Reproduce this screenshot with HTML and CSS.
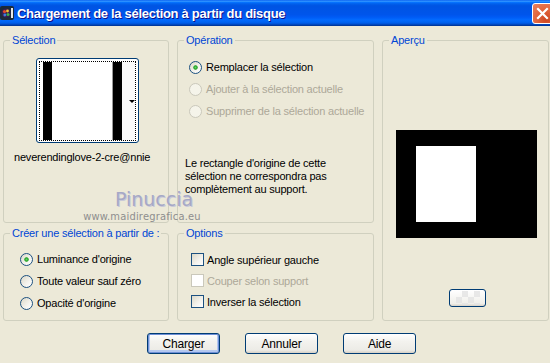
FILE: index.html
```html
<!DOCTYPE html>
<html lang="fr">
<head>
    <meta charset="UTF-8">
    <title>Chargement de la sélection à partir du disque</title>
    <link rel="stylesheet" href="styles.css">
</head>
<body>
    <div class="window">
        <div class="titlebar">
            <svg class="app-icon" width="14" height="14" viewBox="0 0 14 14">
                <rect x="0" y="0" width="14" height="14" rx="2" fill="#1b2a3a"/>
                <circle cx="6" cy="7" r="4.5" fill="#3a1d4f"/>
                <circle cx="4.5" cy="5.5" r="1.6" fill="#e04a2a"/>
                <circle cx="7.5" cy="5" r="1.4" fill="#f2c230"/>
                <circle cx="8" cy="8.5" r="1.5" fill="#3fb04a"/>
                <circle cx="4.8" cy="9" r="1.4" fill="#3a7ee0"/>
                <rect x="11" y="2" width="2" height="10" fill="#e8e8e8"/>
            </svg>
            <span class="title">Chargement de la sélection à partir du disque</span>
            <div class="close-btn">
                <svg width="13" height="13" viewBox="0 0 13 13">
                    <path d="M2 2 L11 11 M11 2 L2 11" stroke="#fff" stroke-width="2.2" stroke-linecap="square"/>
                </svg>
            </div>
        </div>

        <div class="content">
            <div class="groups">
                <fieldset class="group group-selection">
                    <legend>Sélection</legend>
                    <div class="thumb">
                        <div class="thumb-focus">
                            <span class="thumb-bar"></span>
                            <span class="thumb-white"></span>
                            <span class="thumb-bar"></span>
                            <span class="thumb-rest"><span class="thumb-arrow"></span></span>
                        </div>
                    </div>
                    <div class="filename">neverendinglove-2-cre@nnie</div>
                </fieldset>

                <fieldset class="group group-operation">
                    <legend>Opération</legend>
                    <div class="choices">
                        <label class="choice"><span class="radio checked"></span>Remplacer la sélection</label>
                        <label class="choice disabled"><span class="radio"></span>Ajouter à la sélection actuelle</label>
                        <label class="choice disabled"><span class="radio"></span>Supprimer de la sélection actuelle</label>
                    </div>
                    <p class="note">Le rectangle d'origine de cette<br>sélection ne correspondra pas<br>complètement au support.</p>
                </fieldset>

                <fieldset class="group group-preview">
                    <legend>Aperçu</legend>
                    <div class="preview-canvas">
                        <div class="preview-shape"></div>
                    </div>
                    <div class="preview-btn"><span class="checker"></span></div>
                </fieldset>

                <fieldset class="group group-create">
                    <legend>Créer une sélection à partir de :</legend>
                    <div class="choices">
                        <label class="choice"><span class="radio checked"></span>Luminance d'origine</label>
                        <label class="choice"><span class="radio"></span>Toute valeur sauf zéro</label>
                        <label class="choice"><span class="radio"></span>Opacité d'origine</label>
                    </div>
                </fieldset>

                <fieldset class="group group-options">
                    <legend>Options</legend>
                    <div class="choices">
                        <label class="choice"><span class="check"></span>Angle supérieur gauche</label>
                        <label class="choice disabled"><span class="check"></span>Couper selon support</label>
                        <label class="choice"><span class="check"></span>Inverser la sélection</label>
                    </div>
                </fieldset>
            </div>

            <div class="buttons">
                <button class="btn btn-default">Charger</button>
                <button class="btn">Annuler</button>
                <button class="btn">Aide</button>
            </div>

            <div class="watermark">
                <div class="wm-name">Pinuccia</div>
                <div class="wm-url">www.maidiregrafica.eu</div>
            </div>
        </div>
    </div>
</body>
</html>
```

FILE: styles.css
```css
body {
    margin: 0;
    padding: 0;
    background-color: #ece9d8;
    font-family: "Liberation Sans", Arial, sans-serif;
    font-size: 11px;
    letter-spacing: -0.2px;
    color: #000;
    overflow: hidden;
}
.window {
    width: 550px;
    height: 363px;
    overflow: hidden;
    position: relative;
    background-color: #ece9d8;
}
.titlebar {
    height: 26px;
    display: flex;
    align-items: center;
    background: linear-gradient(to bottom, #0058ee 0%, #3593ff 4%, #288eff 6%, #127dff 8%, #036ffc 10%, #0262ee 14%, #0057e5 20%, #0054e3 24%, #0055eb 56%, #005bf5 66%, #026afe 76%, #0062ef 86%, #0052d6 92%, #0040ab 96%, #003092 100%);
}
.app-icon {
    flex: none;
}
.title {
    margin-left: 3px;
    color: #fff;
    font-family: "Liberation Sans", sans-serif;
    font-weight: bold;
    font-size: 13px;
    letter-spacing: -0.3px;
    text-shadow: 1px 1px #0f1089;
    white-space: nowrap;
}
.close-btn {
    margin-left: auto;
    margin-right: -3px;
    width: 19px;
    height: 19px;
    border: 1px solid #fff;
    border-radius: 3px;
    background: radial-gradient(circle at 70% 80%, #cc4620 0%, #e1633b 45%, #e9825f 100%);
    display: flex;
    align-items: center;
    justify-content: center;
}
.content {
    padding: 8px 0 0 3px;
}
.groups {
    display: grid;
    grid-template-columns: 166px 197px 167px;
    grid-template-rows: 189px 94px;
    column-gap: 8px;
    row-gap: 4px;
}
.group {
    margin: 0;
    padding: 0;
    min-width: 0;
    box-sizing: border-box;
    border: 1px solid #d0d0bf;
    border-radius: 3px;
}
.group legend {
    margin-left: 6px;
    padding: 0 2px;
    color: #0046d5;
    font-size: 11px;
    line-height: 12px;
    white-space: nowrap;
}
.group-preview {
    grid-column: 3;
    grid-row: 1 / 3;
}
.group-create {
    grid-column: 1;
    grid-row: 2;
}
.group-options {
    grid-column: 2;
    grid-row: 2;
}

/* selection thumbnail */
.thumb {
    width: 103px;
    height: 85px;
    box-sizing: border-box;
    margin: 12px 0 0 32px;
    padding: 2px 2px 1px;
    border: 1px solid #003c74;
    border-radius: 3px;
    background-color: #fff;
}
.thumb-focus {
    height: 100%;
    box-sizing: border-box;
    border: 1px dotted #000;
    display: flex;
    padding-left: 3px;
}
.thumb-bar {
    width: 9px;
    background-color: #000;
}
.thumb-white {
    width: 60px;
    background-color: #fff;
    border-right: 1px solid #9a9a9a;
}
.thumb-rest {
    flex: 1;
    display: flex;
    align-items: center;
    padding-left: 7px;
    background-color: #fafafa;
}
.thumb-arrow {
    width: 0;
    height: 0;
    border-left: 3px solid transparent;
    border-right: 3px solid transparent;
    border-top: 3px solid #000;
}
.filename {
    margin-top: 8px;
    padding-left: 10px;
    line-height: 13px;
    white-space: nowrap;
}

/* radios and checkboxes */
.choices {
    display: flex;
    flex-direction: column;
}
.choice {
    display: flex;
    align-items: center;
    gap: 4px;
    white-space: nowrap;
}
.choice.disabled {
    color: #aca899;
}
.radio {
    width: 13px;
    height: 13px;
    box-sizing: border-box;
    border: 1px solid #1c5180;
    border-radius: 50%;
    background: linear-gradient(135deg, #dcd9c8 0%, #f4f3ee 60%, #fff 100%);
    flex: none;
}
.radio.checked {
    background: radial-gradient(circle, #63d26a 0%, #21a121 1.8px, transparent 2.6px), linear-gradient(135deg, #dcd9c8 0%, #f4f3ee 60%, #fff 100%);
}
.choice.disabled .radio {
    border-color: #cac8bb;
    background: #f5f4ea;
}
.check {
    width: 13px;
    height: 13px;
    box-sizing: border-box;
    border: 1px solid #1c5180;
    background: linear-gradient(135deg, #dcd9c8 0%, #f4f3ee 60%, #fff 100%);
    flex: none;
}
.choice.disabled .check {
    border-color: #cac8bb;
    background: #fff;
}

.group-operation .choices {
    padding: 10px 0 0 11px;
}
.group-operation .choice {
    height: 22px;
}
.note {
    margin: 35px 0 0 7px;
    line-height: 13px;
}
.group-create .choices {
    padding: 9px 0 0 16px;
}
.group-create .choice {
    height: 22px;
}
.group-options .choices {
    padding: 10px 0 0 13px;
}
.group-options .choice {
    height: 21px;
    gap: 3px;
}

/* preview */
.preview-canvas {
    width: 141px;
    height: 108px;
    margin: 84px 0 0 13px;
    padding: 16px 0 0 20px;
    box-sizing: border-box;
    background-color: #000;
}
.preview-shape {
    width: 60px;
    height: 76px;
    background-color: #fff;
}
.preview-btn {
    width: 37px;
    height: 18px;
    box-sizing: border-box;
    margin: 51px 0 0 66px;
    border: 1px solid #003c74;
    border-radius: 3px;
    background: linear-gradient(#fff, #f0efea 85%, #d6d0c5);
    display: flex;
    align-items: center;
    justify-content: center;
}
.checker {
    width: 24px;
    height: 14px;
    background-image: linear-gradient(45deg, #e4e4e4 25%, transparent 25%, transparent 75%, #e4e4e4 75%), linear-gradient(45deg, #e4e4e4 25%, transparent 25%, transparent 75%, #e4e4e4 75%);
    background-size: 12px 12px;
    background-position: 0 0, 6px 6px;
    opacity: 0.8;
}

/* dialog buttons */
.buttons {
    display: flex;
    gap: 25px;
    margin-top: 12px;
    padding-left: 144px;
}
.btn {
    width: 73px;
    height: 21px;
    box-sizing: border-box;
    border: 1px solid #003c74;
    border-radius: 3px;
    background: linear-gradient(#fff, #f3f2ee 40%, #ecebe6 85%, #d6d0c5);
    font-family: inherit;
    font-size: 12px;
    letter-spacing: -0.2px;
    color: #000;
    padding: 0;
}
.btn-default {
    box-shadow: inset 0 0 0 1px #6e8fd6, inset 0 -1px 0 2px #b4c8f0;
}

/* watermark over the dialog */
.watermark {
    position: absolute;
    left: 80px;
    top: 189px;
    width: 124px;
    text-align: center;
    pointer-events: none;
    letter-spacing: 0;
}
.wm-name {
    font-family: "DejaVu Sans", sans-serif;
    font-size: 19px;
    line-height: 21px;
    color: #a6a8c6;
    text-shadow: 1px 1px 0 #c9c9d8;
    padding-left: 24px;
}
.wm-url {
    font-family: "DejaVu Sans Condensed", "DejaVu Sans", sans-serif;
    font-size: 11px;
    line-height: 13px;
    color: #8e8e8e;
    letter-spacing: 0.2px;
}
```
